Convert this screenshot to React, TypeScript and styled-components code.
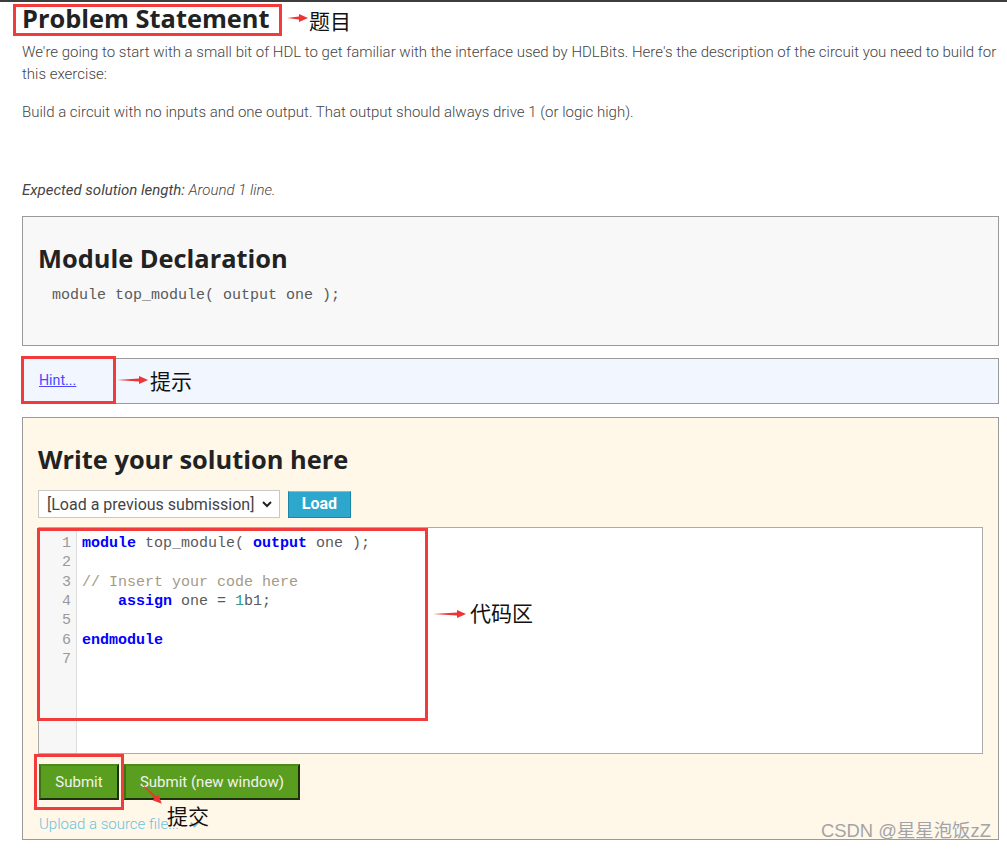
import styled, { createGlobalStyle } from 'styled-components';

const GlobalStyle = createGlobalStyle`
  html, body {
    margin: 0;
    padding: 0;
    background: #fff;
    overflow: hidden;
  }
  body {
    font-family: Roboto, "Liberation Sans", sans-serif;
    color: #444;
  }
`;

const Root = styled.div`
  position: relative;
  min-height: 849px;
`;

const TopBar = styled.div`
  height: 2px;
  background: #3d3d3d;
`;

const Content = styled.main`
  padding: 0 8px 0 22px;
`;

const Title = styled.h1`
  margin: 1px 0 0;
  font: 700 25.4px/30px 'Open Sans', 'Noto Sans', sans-serif;
  color: #222;
`;

const Text = styled.p<{ $gap: number }>`
  margin: ${(p) => p.$gap}px 0 0;
  font-size: 15px;
  line-height: 22px;
  font-weight: 300;
  color: #444;
  em {
    font-style: italic;
  }
`;

const tones = {
  plain: '#f8f8f8',
  hint: '#f2f7ff',
  work: '#fff7e8',
};

const Panel = styled.section<{ $tone: keyof typeof tones; $gap: number }>`
  margin-top: ${(p) => p.$gap}px;
  border: 1px solid #9a9a9a;
  background: ${(p) => tones[p.$tone]};
  padding: 0 15px;
`;

const DeclPanel = styled(Panel)`
  padding-bottom: 39px;
`;

const HintPanel = styled(Panel)`
  padding: 11px 16px 13px;
`;

const WorkPanel = styled(Panel)`
  padding-bottom: 5px;
`;

const PanelTitle = styled.h2`
  margin: 26px 0 0;
  font: 700 25.4px/30px 'Open Sans', 'Noto Sans', sans-serif;
  color: #222;
`;

const mono = `'Liberation Mono', 'DejaVu Sans Mono', monospace`;

const Decl = styled.pre`
  margin: 13px 0 0;
  padding-left: 14px;
  font: 15px/20px ${mono};
  color: #5a5a5a;
`;

const HintLink = styled.a`
  font-size: 14.2px;
  line-height: 20px;
  color: #4848ff;
  text-decoration: underline;
  cursor: pointer;
`;

const Toolbar = styled.div`
  margin-top: 16px;
  display: flex;
  align-items: center;
  gap: 8px;
`;

const SelectBox = styled.div`
  width: 242px;
  height: 28px;
  box-sizing: border-box;
  border: 1px solid #c8c8c8;
  background: #fff;
  display: flex;
  align-items: center;
  justify-content: space-between;
  padding: 0 6px 0 8px;
  font-size: 16px;
  color: #444;
`;

const LoadButton = styled.button`
  width: 63px;
  height: 27px;
  border: 1px solid #1c86a6;
  border-top-color: #6cc6e2;
  background: #2da7cc;
  color: #fff;
  font: 700 16px/1 Roboto, 'Liberation Sans', sans-serif;
  padding: 0;
`;

const Editor = styled.div`
  margin-top: 9px;
  height: 227px;
  box-sizing: border-box;
  border: 1px solid #ababab;
  background: #fff;
  display: flex;
  font: 15px/19.33px ${mono};
`;

const Gutter = styled.div`
  width: 38px;
  box-sizing: border-box;
  background: #f7f7f7;
  border-right: 1px solid #ddd;
  padding: 6px 5px 0 0;
  text-align: right;
  color: #999;
`;

const Code = styled.div`
  padding: 6px 0 0 5px;
  color: #5a5a5a;
  white-space: pre;
`;

const Line = styled.div`
  height: 19.33px;
`;

const Kw = styled.span`
  color: #0000ff;
  font-weight: 700;
`;

const Comment = styled.span`
  color: #a59a88;
`;

const Num = styled.span`
  color: #2a9a8a;
`;

const Actions = styled.div`
  margin-top: 10px;
  display: flex;
  gap: 5px;
  padding-left: 1px;
`;

const SubmitButton = styled.button<{ $w: number }>`
  width: ${(p) => p.$w}px;
  height: 36px;
  background: #5a9e1f;
  border: 2px solid;
  border-color: #4d8a1a #1d300b #1d300b #3f7015;
  color: #f2f2f2;
  font: 15px/1 Roboto, 'Liberation Sans', sans-serif;
  padding: 0;
`;

const Upload = styled.div`
  margin-top: 14px;
  padding-left: 1px;
  display: flex;
  align-items: center;
  gap: 10px;
  font-size: 15px;
  line-height: 20px;
  font-weight: 300;
  color: #6cc3de;
`;

/* annotation overlay (red marks drawn over the screenshot) */

const Frame = styled.div<{ $x: number; $y: number; $w: number; $h: number }>`
  position: absolute;
  left: ${(p) => p.$x}px;
  top: ${(p) => p.$y}px;
  width: ${(p) => p.$w}px;
  height: ${(p) => p.$h}px;
  box-sizing: border-box;
  border: 3px solid #f23b3b;
  pointer-events: none;
`;

const ArrowWrap = styled.svg<{ $x: number; $y: number; $angle: number }>`
  position: absolute;
  left: ${(p) => p.$x}px;
  top: ${(p) => p.$y - 5}px;
  transform-origin: 0 5px;
  transform: rotate(${(p) => p.$angle}deg);
  overflow: visible;
`;

const Label = styled.span<{ $x: number; $y: number }>`
  position: absolute;
  left: ${(p) => p.$x}px;
  top: ${(p) => p.$y}px;
  font: 21px/22px 'Noto Sans CJK SC', sans-serif;
  color: #111;
  white-space: nowrap;
`;

const Watermark = styled.span`
  position: absolute;
  left: 821px;
  top: 820px;
  font: 18.4px/22px 'Liberation Sans', 'Noto Sans CJK SC', sans-serif;
  color: #a3a3a3;
  text-shadow: 0 0 1px #fff;
`;

function Arrow({ x, y, len, angle = 0 }: { x: number; y: number; len: number; angle?: number }) {
  const h = len - 9;
  return (
    <ArrowWrap $x={x} $y={y} $angle={angle} width={len} height={10} viewBox={`0 0 ${len} 10`}>
      <path d={`M0 5 L${h} 3.6 L${h} 1 L${len} 5 L${h} 9 L${h} 6.4 Z`} fill="#ee3434" />
    </ArrowWrap>
  );
}

function Chevron({ color, size }: { color: string; size: number }) {
  return (
    <svg width={size} height={size} viewBox="0 0 12 12">
      <path d="M2 4 L6 8 L10 4" fill="none" stroke={color} strokeWidth="2" />
    </svg>
  );
}

export default function App() {
  return (
    <Root>
      <GlobalStyle />
      <TopBar />
      <Content>
        <Title>Problem Statement</Title>
        <Text $gap={8}>
          We're going to start with a small bit of HDL to get familiar with the interface used by HDLBits. Here's
          the description of the circuit you need to build for this exercise:
        </Text>
        <Text $gap={16}>Build a circuit with no inputs and one output. That output should always drive 1 (or logic high).</Text>
        <Text $gap={56}>
          <em style={{ fontWeight: 400 }}>Expected solution length:</em> <em>Around 1 line.</em>
        </Text>

        <DeclPanel $tone="plain" $gap={15}>
          <PanelTitle>Module Declaration</PanelTitle>
          <Decl>module top_module( output one );</Decl>
        </DeclPanel>

        <HintPanel $tone="hint" $gap={12}>
          <HintLink>Hint...</HintLink>
        </HintPanel>

        <WorkPanel $tone="work" $gap={13}>
          <PanelTitle>Write your solution here</PanelTitle>
          <Toolbar>
            <SelectBox>
              [Load a previous submission]
              <Chevron color="#222" size={12} />
            </SelectBox>
            <LoadButton>Load</LoadButton>
          </Toolbar>
          <Editor>
            <Gutter>
              {[1, 2, 3, 4, 5, 6, 7].map((n) => (
                <Line key={n}>{n}</Line>
              ))}
            </Gutter>
            <Code>
              <Line>
                <Kw>module</Kw> top_module( <Kw>output</Kw> one );
              </Line>
              <Line />
              <Line>
                <Comment>// Insert your code here</Comment>
              </Line>
              <Line>
                {'    '}
                <Kw>assign</Kw> one = <Num>1</Num>b1;
              </Line>
              <Line />
              <Line>
                <Kw>endmodule</Kw>
              </Line>
              <Line />
            </Code>
          </Editor>
          <Actions>
            <SubmitButton $w={80}>Submit</SubmitButton>
            <SubmitButton $w={176}>Submit (new window)</SubmitButton>
          </Actions>
          <Upload>
            Upload a source file...
            <Chevron color="#6cc3de" size={11} />
          </Upload>
        </WorkPanel>
      </Content>

      <Frame $x={13} $y={4} $w={269} $h={32} />
      <Arrow x={287} y={18} len={21} />
      <Label $x={309} $y={9}>题目</Label>

      <Frame $x={21} $y={356} $w={95} $h={48} />
      <Arrow x={117} y={380} len={31} />
      <Label $x={150} $y={369}>提示</Label>

      <Frame $x={37} $y={528} $w={391} $h={193} />
      <Arrow x={433} y={614} len={33} />
      <Label $x={470} $y={601}>代码区</Label>

      <Frame $x={34} $y={754} $w={90} $h={56} />
      <Arrow x={142} y={784} len={28} angle={45} />
      <Label $x={167} $y={804}>提交</Label>

      <Watermark>CSDN @星星泡饭zZ</Watermark>
    </Root>
  );
}
